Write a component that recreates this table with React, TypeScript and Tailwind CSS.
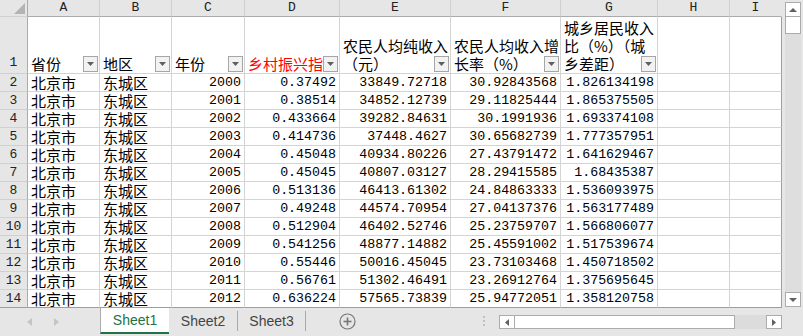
import React from "react";

const CJK = "font-['Noto_Sans_CJK_SC','Noto_Sans',sans-serif]";
const MONO = "font-['Liberation_Mono','DejaVu_Sans_Mono',monospace]";

const data: string[][] = [
  ["2000", "0.37492", "33849.72718", "30.92843568", "1.826134198"],
  ["2001", "0.38514", "34852.12739", "29.11825444", "1.865375505"],
  ["2002", "0.433664", "39282.84631", "30.1991936", "1.693374108"],
  ["2003", "0.414736", "37448.4627", "30.65682739", "1.777357951"],
  ["2004", "0.45048", "40934.80226", "27.43791472", "1.641629467"],
  ["2005", "0.45045", "40807.03127", "28.29415585", "1.68435387"],
  ["2006", "0.513136", "46413.61302", "24.84863333", "1.536093975"],
  ["2007", "0.49248", "44574.70954", "27.04137376", "1.563177489"],
  ["2008", "0.512904", "46402.52746", "25.23759707", "1.566806077"],
  ["2009", "0.541256", "48877.14882", "25.45591002", "1.517539674"],
  ["2010", "0.55446", "50016.45045", "23.73103468", "1.450718502"],
  ["2011", "0.56761", "51302.46491", "23.26912764", "1.375695645"],
  ["2012", "0.636224", "57565.73839", "25.94772051", "1.358120758"],
];

const letters = ["A", "B", "C", "D", "E", "F", "G", "H", "I"];

function FilterBtn() {
  return (
    <div className="absolute right-[1px] bottom-[1px] w-[15px] h-[16px] border border-[#a6a6a6] bg-[#f2f2f2] flex items-center justify-center">
      <svg width="7" height="4" viewBox="0 0 7 4">
        <polygon points="0,0 7,0 3.5,4" fill="#5f5f5f" />
      </svg>
    </div>
  );
}

function HeaderCell({ lines, red }: { lines: string[]; red?: boolean }) {
  return (
    <div
      className={`relative bg-white border-b border-r border-[#d4d4d4] overflow-hidden flex flex-col justify-end pl-[3px] text-[15px] leading-[18px] ${CJK} ${
        red ? "text-[#ff0000]" : "text-black"
      }`}
    >
      {lines.map((l, i) => (
        <div key={i} className="whitespace-nowrap">
          {l}
        </div>
      ))}
      <FilterBtn />
    </div>
  );
}

function VScroll() {
  return (
    <div className="w-[21px] h-[308px] bg-[#e6e6e6] flex flex-col items-center pt-[2px] pb-[1px] pl-[1px]">
      <div className="w-[16px] h-[15px] bg-white border border-[#ababab] flex items-center justify-center">
        <svg width="8" height="4" viewBox="0 0 8 4">
          <polygon points="0,4 8,4 4,0" fill="#606060" />
        </svg>
      </div>
      <div className="w-[16px] h-[17px] bg-white border border-t-0 border-[#ababab]" />
      <div className="w-[16px] flex-1 bg-[#dedede]" />
      <div className="w-[16px] h-[15px] bg-white border border-[#ababab] flex items-center justify-center">
        <svg width="8" height="4" viewBox="0 0 8 4">
          <polygon points="0,0 8,0 4,4" fill="#606060" />
        </svg>
      </div>
    </div>
  );
}

function TabBar() {
  return (
    <div className="h-[28px] w-[803px] bg-[#e6e6e6] flex items-start font-['Liberation_Sans','Open_Sans',sans-serif] text-[14px]">
      <div className="w-[100px] h-[28px] flex items-center pl-[27px] gap-[22px]">
        <svg width="5" height="8" viewBox="0 0 5 8">
          <polygon points="5,0 5,8 0,4" fill="#c4c4c4" />
        </svg>
        <svg width="5" height="8" viewBox="0 0 5 8">
          <polygon points="0,0 0,8 5,4" fill="#c4c4c4" />
        </svg>
      </div>
      <div className="w-[69px] h-[26px] bg-white border-l border-[#ababab] border-b-[2px] border-b-[#217346] flex items-center justify-center text-[#217346]">
        Sheet1
      </div>
      <div className="w-[69px] h-[26px] flex items-center">
        <div className="flex-1 text-center text-[#444]">Sheet2</div>
        <div className="w-[1px] h-[20px] bg-[#a8a8a8]" />
      </div>
      <div className="w-[68px] h-[26px] flex items-center">
        <div className="flex-1 text-center text-[#444]">Sheet3</div>
        <div className="w-[1px] h-[20px] bg-[#a8a8a8]" />
      </div>
      <div className="w-[84px] h-[26px] flex items-center pl-[33px]">
        <svg width="17" height="17" viewBox="0 0 17 17">
          <circle cx="8.5" cy="8.5" r="7.5" fill="none" stroke="#777" strokeWidth="1.2" />
          <line x1="8.5" y1="4.5" x2="8.5" y2="12.5" stroke="#777" strokeWidth="1.6" />
          <line x1="4.5" y1="8.5" x2="12.5" y2="8.5" stroke="#777" strokeWidth="1.6" />
        </svg>
      </div>
      <div className="flex-1 h-[26px] flex items-center justify-end pr-[14px]">
        <div className="flex flex-col gap-[2px]">
          <div className="w-[2px] h-[2px] bg-[#c0c0c0]" />
          <div className="w-[2px] h-[2px] bg-[#c0c0c0]" />
          <div className="w-[2px] h-[2px] bg-[#c0c0c0]" />
        </div>
      </div>
      <div className="w-[283px] h-[14px] mt-[7px] flex">
        <div className="w-[16px] h-[14px] bg-white border border-[#ababab] flex items-center justify-center">
          <svg width="4" height="7" viewBox="0 0 4 7">
            <polygon points="4,0 4,7 0,3.5" fill="#606060" />
          </svg>
        </div>
        <div className="w-[220px] h-[14px] bg-white border-t border-b border-r border-[#ababab]" />
        <div className="flex-1 h-[14px] bg-[#dcdcdc]" />
        <div className="w-[16px] h-[14px] bg-white border border-[#ababab] flex items-center justify-center">
          <svg width="4" height="7" viewBox="0 0 4 7">
            <polygon points="0,0 0,7 4,3.5" fill="#606060" />
          </svg>
        </div>
      </div>
      <div className="w-[21px] h-[28px]" />
    </div>
  );
}

export default function App() {
  return (
    <div className="w-[803px] h-[336px] bg-[#e6e6e6] flex flex-col overflow-hidden">
      <div className="flex h-[308px]">
        <div className="w-[782px] h-[308px] grid grid-cols-[28px_72px_72px_73px_95px_111px_110px_97px_72px_52px] grid-rows-[17px_57px_repeat(13,18px)] bg-white">
          <div className="relative bg-[#e6e6e6] border-r border-b border-r-[#ababab] border-b-[#d0d0d0]">
            <svg className="absolute right-[2px] bottom-[2px]" width="11" height="11" viewBox="0 0 11 11">
              <polygon points="11,0 11,11 0,11" fill="#b4b4b4" />
            </svg>
          </div>
          {letters.map((l, i) => (
            <div
              key={l}
              className={`bg-[#e6e6e6] border-b border-r border-b-[#ababab] ${
                i === 8 ? "border-r-[#e6e6e6]" : "border-r-[#d0d0d0]"
              } flex items-center justify-center text-[13px] text-[#222] ${MONO}`}
            >
              {l}
            </div>
          ))}
          <div className={`bg-[#e6e6e6] border-r border-b border-r-[#ababab] border-b-[#d0d0d0] flex items-end justify-center pb-[1px] text-[13px] text-[#222] ${MONO}`}>
            1
          </div>
          <HeaderCell lines={["省份"]} />
          <HeaderCell lines={["地区"]} />
          <HeaderCell lines={["年份"]} />
          <HeaderCell lines={["乡村振兴指"]} red />
          <HeaderCell lines={["农民人均纯收入", "（元）"]} />
          <HeaderCell lines={["农民人均收入增", "长率（%）"]} />
          <HeaderCell lines={["城乡居民收入", "比（%）（城", "乡差距）"]} />
          <div className="bg-white border-b border-r border-[#d4d4d4]" />
          <div className="bg-white border-b border-r border-b-[#d4d4d4] border-r-[#9e9e9e]" />
          {data.map((r, idx) => {
            const lastRow = idx === data.length - 1;
            const cell = lastRow
              ? "bg-white border-r border-b border-r-[#d4d4d4] border-b-[#9e9e9e]"
              : "bg-white border-r border-b border-[#d4d4d4]";
            const num = `${cell} flex items-center justify-end pr-[3px] text-[13.3px] text-black whitespace-nowrap overflow-hidden ${MONO}`;
            const txt = `${cell} flex items-center pl-[3px] text-[15px] leading-[18px] text-black whitespace-nowrap ${CJK}`;
            return (
              <React.Fragment key={idx}>
                <div
                  className={`bg-[#e6e6e6] border-r border-b border-r-[#ababab] ${
                    lastRow ? "border-b-[#9e9e9e]" : "border-b-[#d0d0d0]"
                  } flex items-center justify-center text-[13px] text-[#222] ${MONO}`}
                >
                  {idx + 2}
                </div>
                <div className={txt}>北京市</div>
                <div className={txt}>东城区</div>
                {r.map((v, j) => (
                  <div key={j} className={num}>
                    {v}
                  </div>
                ))}
                <div className={cell} />
                <div
                  className={`bg-white border-r border-b border-r-[#9e9e9e] ${
                    lastRow ? "border-b-[#9e9e9e]" : "border-b-[#d4d4d4]"
                  }`}
                />
              </React.Fragment>
            );
          })}
        </div>
        <VScroll />
      </div>
      <TabBar />
    </div>
  );
}
